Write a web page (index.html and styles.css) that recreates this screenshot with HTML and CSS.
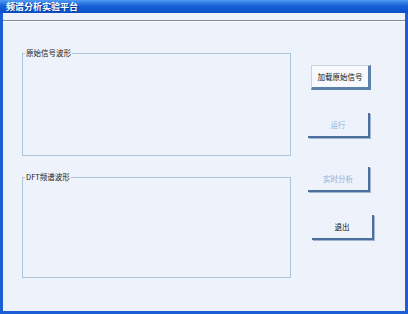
FILE: index.html
```html
<!DOCTYPE html>
<html lang="zh-CN">
<head>
    <meta charset="UTF-8">
    <title>频谱分析实验平台</title>
    <link rel="stylesheet" href="styles.css">
</head>
<body>
    <div class="window">
        <div class="titlebar">频谱分析实验平台</div>
        <div class="menu-strip"></div>
        <div class="client">
            <div class="plots">
                <fieldset class="group group-signal">
                    <legend>原始信号波形</legend>
                </fieldset>
                <fieldset class="group group-dft">
                    <legend>DFT频谱波形</legend>
                </fieldset>
            </div>
            <div class="actions">
                <button class="btn btn-load">加载原始信号</button>
                <button class="btn btn-flat" disabled>运行</button>
                <button class="btn btn-flat btn-realtime" disabled>实时分析</button>
                <button class="btn btn-flat btn-exit">退出</button>
            </div>
        </div>
    </div>
</body>
</html>
```

FILE: styles.css
```css
html, body {
    margin: 0;
    padding: 0;
}

body {
    width: 408px;
    height: 314px;
    overflow: hidden;
    font-family: "Noto Sans CJK SC", "DejaVu Sans", sans-serif;
}

.window {
    box-sizing: border-box;
    width: 408px;
    height: 314px;
    background-color: #eef2fb;
    border-left: 3px solid #1a5fd6;
    border-right: 3px solid #1a5fd6;
    border-bottom: 3px solid #1a5fd6;
    display: flex;
    flex-direction: column;
}

.titlebar {
    height: 13px;
    margin: 0 -3px;
    padding-left: 6px;
    background: linear-gradient(#4f9bf3, #1662d8 45%, #0b4fc8);
    color: #fff;
    font-size: 9px;
    font-weight: bold;
    line-height: 13px;
    text-shadow: 1px 1px 0 #0a3a90;
}

.menu-strip {
    height: 7px;
    border-bottom: 1px solid #7d8a99;
    box-shadow: 0 1px 0 #ffffff;
}

.client {
    display: flex;
    flex: 1;
}

.plots {
    padding-left: 19px;
    padding-top: 27px;
    display: flex;
    flex-direction: column;
    gap: 16px;
}

.group {
    box-sizing: border-box;
    width: 269px;
    margin: 0;
    padding: 0;
    border: 1px solid #abc5dc;
}

.group legend {
    margin-left: 2px;
    padding: 0 1px;
    font-size: 7.5px;
    line-height: 10px;
    color: #222;
}

.group-signal {
    height: 108px;
}

.group-dft {
    height: 106px;
}

.actions {
    margin-left: 17px;
    padding-top: 44px;
    display: flex;
    flex-direction: column;
    gap: 23px;
}

.btn {
    box-sizing: border-box;
    width: 62px;
    height: 25px;
    padding: 0;
    font-family: inherit;
    font-size: 7.5px;
    color: #111;
    background-color: #f7f9fd;
    border-top: 1px solid #c9d2de;
    border-left: 1px solid #c9d2de;
    border-right: 3px solid #5d80ab;
    border-bottom: 3px solid #5d80ab;
    border-radius: 0;
}

.btn-load {
    margin-left: 3px;
    width: 60px;
}

.btn-flat {
    background-color: transparent;
    border-top: none;
    border-left: none;
    border-right: 2px solid #4d6f9b;
    border-bottom: 2px solid #4d6f9b;
    box-shadow: 1px 1px 0 #9fb6d2;
}

.btn-flat:disabled {
    color: #8bb3de;
}

.btn-realtime {
    margin-top: 6px;
}

.btn-exit {
    margin-left: 4px;
}
```
